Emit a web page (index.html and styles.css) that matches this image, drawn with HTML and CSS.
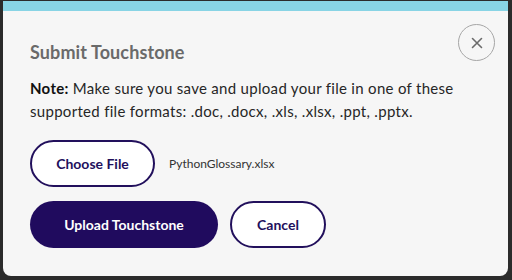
FILE: index.html
```html
<!DOCTYPE html>
<html>
<head>
<meta charset="utf-8">
<link rel="stylesheet" href="styles.css">
</head>
<body>
<div class="dialog">
  <div class="topbar"></div>
  <div class="content">
    <div class="header">
      <h1 class="title">Submit Touchstone</h1>
      <button class="close" aria-label="Close">
        <svg width="12" height="12" viewBox="0 0 12 12"><path d="M1.5 1.5 L10.5 10.5 M10.5 1.5 L1.5 10.5" stroke="#6b6b6b" stroke-width="1.6" stroke-linecap="round"/></svg>
      </button>
    </div>
    <p class="note"><b>Note:</b> Make sure you save and upload your file in one of these supported file formats: .doc, .docx, .xls, .xlsx, .ppt, .pptx.</p>
    <div class="file-row">
      <button class="btn btn-outline choose">Choose File</button>
      <span class="filename">PythonGlossary.xlsx</span>
    </div>
    <div class="actions">
      <button class="btn btn-primary upload">Upload Touchstone</button>
      <button class="btn btn-outline cancel">Cancel</button>
    </div>
  </div>
</div>
</body>
</html>
```
FILE: styles.css
```css
html, body {
  margin: 0;
  padding: 0;
}
body {
  background: #2b2b2b;
  width: 512px;
  height: 280px;
  overflow: hidden;
  font-family: "Lato", "Noto Sans", sans-serif;
}
.dialog {
  margin: 1px 4px 0 3px;
  height: 275px;
  background: #f6f6f6;
  border-radius: 0 0 8px 8px;
  overflow: hidden;
}
.topbar {
  height: 10px;
  background: #88d4e5;
}
.content {
  padding: 13px 13px 0 27px;
}
.header {
  display: flex;
  justify-content: space-between;
  align-items: flex-start;
}
.title {
  margin: 16px 0 0 0;
  font-size: 18px;
  line-height: 24px;
  font-weight: 700;
  color: #6a6a6a;
  letter-spacing: 0.1px;
}
.close {
  width: 37px;
  height: 37px;
  border-radius: 50%;
  border: 1.5px solid #a6a6a6;
  background: transparent;
  padding: 0;
  display: flex;
  align-items: center;
  justify-content: center;
}
.note {
  margin: 13px 0 0 0;
  font-size: 15px;
  line-height: 23px;
  letter-spacing: 0.3px;
  color: #262626;
  width: 450px;
}
.note b {
  color: #111;
}
.file-row {
  display: flex;
  align-items: center;
  gap: 14px;
  margin-top: 17px;
}
.btn {
  height: 47px;
  border-radius: 24px;
  font-family: inherit;
  font-size: 14px;
  font-weight: 700;
  padding: 0;
  box-sizing: border-box;
}
.btn-outline {
  background: #ffffff;
  border: 2px solid #22105c;
  color: #22105c;
}
.btn-primary {
  background: #200b5e;
  border: none;
  color: #ffffff;
}
.choose {
  width: 125px;
}
.filename {
  font-size: 12px;
  color: #333333;
}
.actions {
  display: flex;
  gap: 12px;
  margin-top: 14px;
}
.upload {
  width: 188px;
}
.cancel {
  width: 96px;
}
```
